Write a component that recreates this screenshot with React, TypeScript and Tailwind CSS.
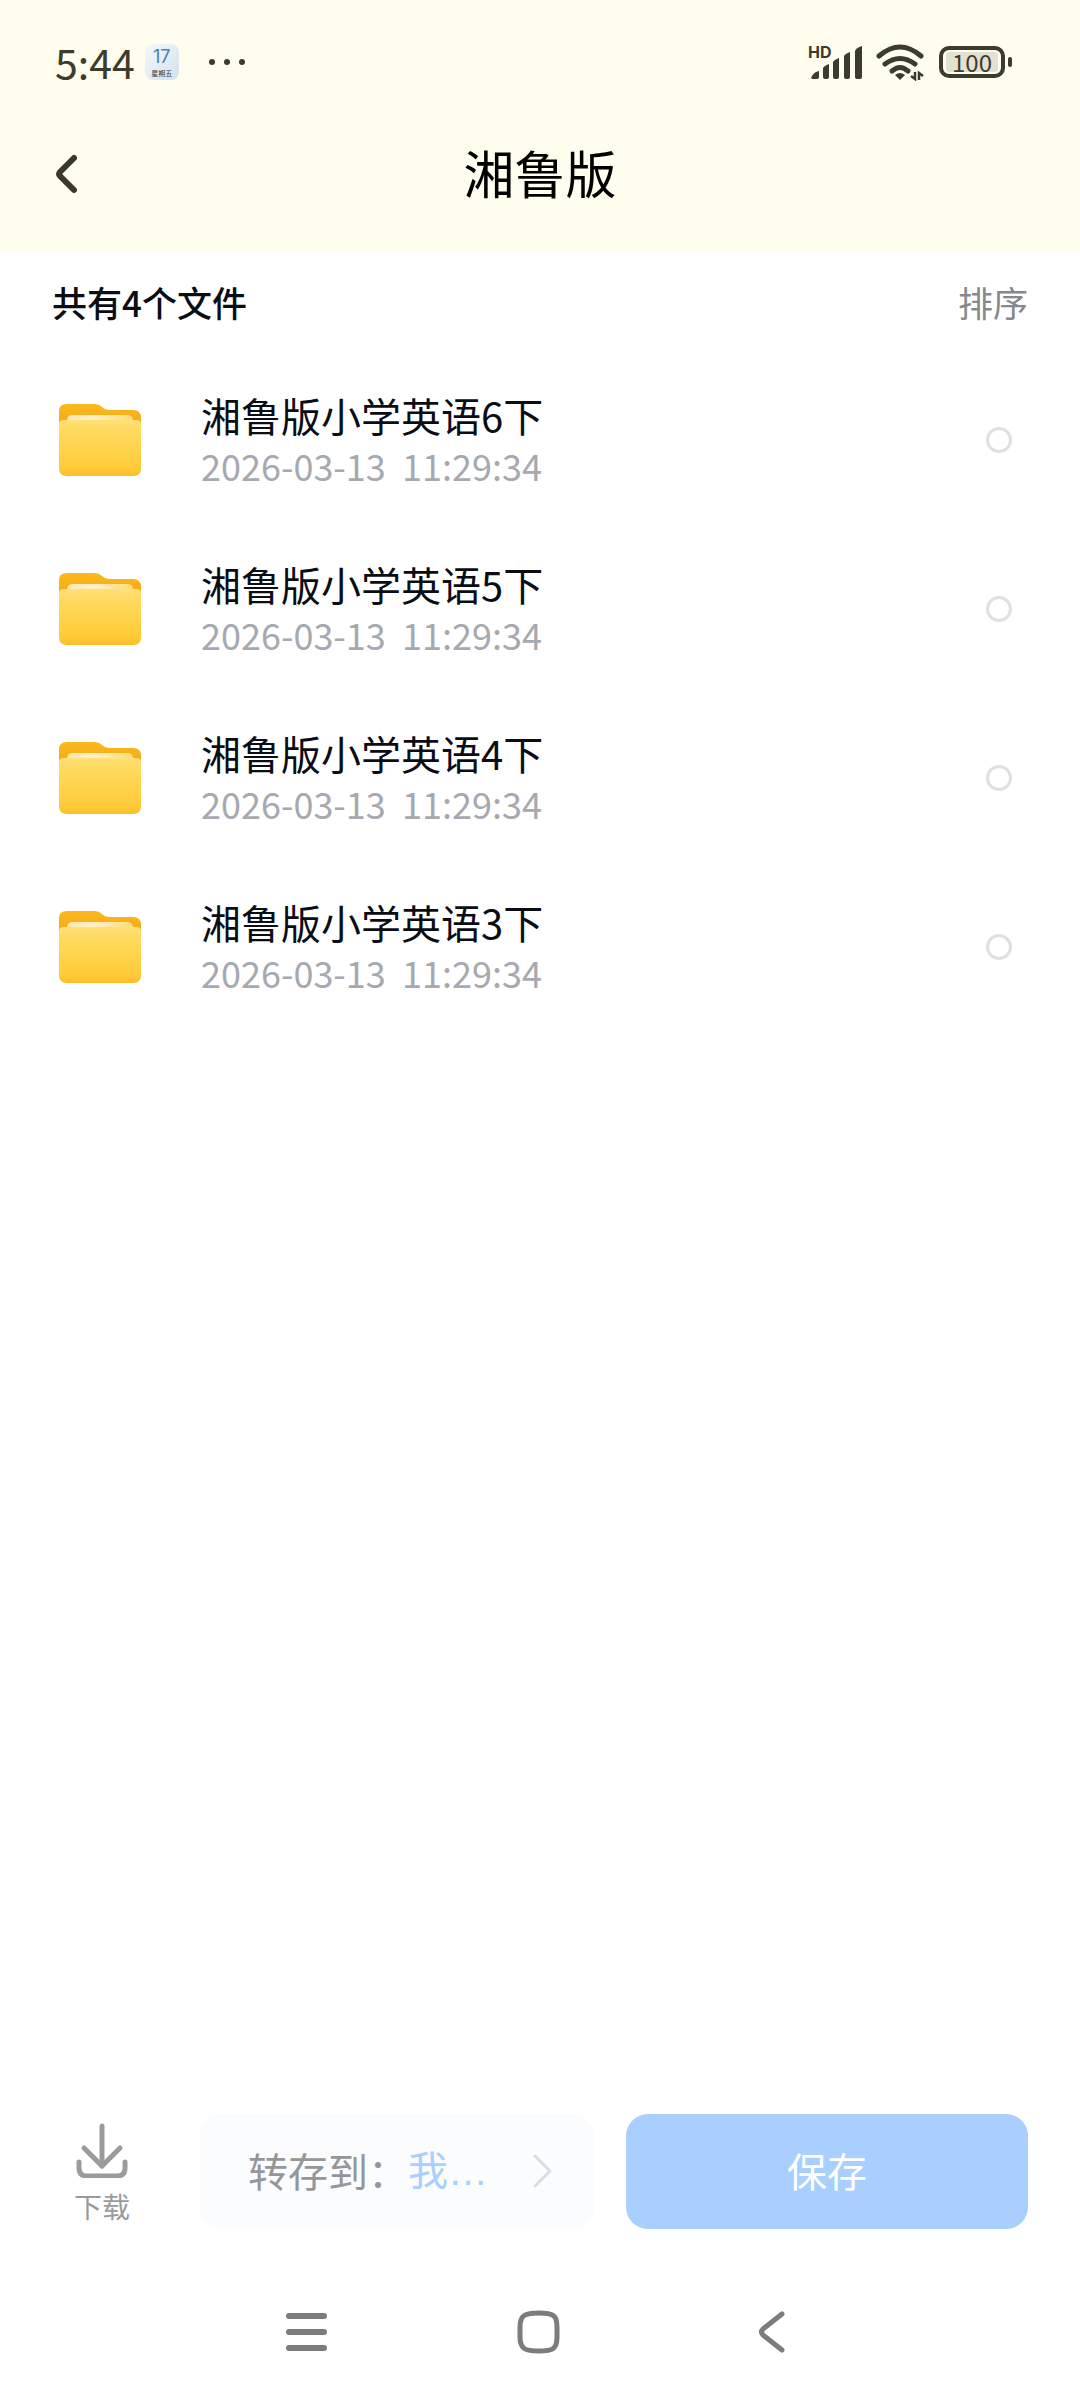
import { useState } from "react";

interface FileItem {
    id: number,
    name: string,
    date: string,
    time: string
}

const files: FileItem[] = [
    { id: 1, name: "湘鲁版小学英语6下", date: "2026-03-13", time: "11:29:34" },
    { id: 2, name: "湘鲁版小学英语5下", date: "2026-03-13", time: "11:29:34" },
    { id: 3, name: "湘鲁版小学英语4下", date: "2026-03-13", time: "11:29:34" },
    { id: 4, name: "湘鲁版小学英语3下", date: "2026-03-13", time: "11:29:34" },
];

function CalendarBadge() {
    return (
        <div className="ml-[10px] flex h-9 w-[34px] flex-col items-center justify-center rounded-lg bg-linear-to-br from-[#f4f9fb] to-[#d5e0ee]">
            <span className="font-[Inter,sans-serif] text-[18px] leading-[22px] text-[#4583b8]">17</span>
            <span className="text-[7px] leading-[11px] text-[#33373b]">星期五</span>
        </div>
    )
}

function StatusBar() {
    return (
        <div className="flex h-24 items-center pt-7 pr-[68px] pl-[55px] text-[#3d3b2c]">
            <span className="pb-0.5 text-[41px] leading-[40px]">5:44</span>
            <CalendarBadge />
            <svg className="ml-7" width="40" height="10" viewBox="0 0 40 10" fill="currentColor">
                <circle cx="5" cy="5" r="3" />
                <circle cx="20" cy="5" r="3" />
                <circle cx="35" cy="5" r="3" />
            </svg>
            <div className="ml-auto flex items-center">
                {/* signal */}
                <svg width="56" height="48" viewBox="0 -6 56 48" fill="currentColor">
                    <text x="1" y="14" fontSize="16" fontWeight="700" fontFamily="Inter, sans-serif">HD</text>
                    <path d="M6 35 Q3 35 5 32 Q7 28 12 27 V33 Q12 35 10 35 Z" />
                    <path d="M16 24 Q17 22 22 20 V33 Q22 35 20 35 H18 Q16 35 16 33 Z" />
                    <path d="M26 18 Q27 16 32 14 V33 Q32 35 30 35 H28 Q26 35 26 33 Z" />
                    <path d="M37 12 Q38 10 43 8 V33 Q43 35 41 35 H39 Q37 35 37 33 Z" />
                    <path d="M48 7 Q49 4 55 2 V33 Q55 35 53 35 H50 Q48 35 48 33 Z" />
                </svg>
                {/* wifi */}
                <svg className="ml-3" width="52" height="38" viewBox="0 0 52 38" fill="none" stroke="currentColor" strokeWidth="5" strokeLinecap="round">
                    <path d="M4 13 Q25 -5 46 13" />
                    <path d="M10 21 Q25 10 40 21" />
                    <path d="M17 28 Q25 21 33 28" />
                    <path d="M20 32 Q25 28 30 32 L25 37 Z" fill="currentColor" stroke="none" />
                    <path d="M40 29 V36 L36 33 M44 37 V30 L48 33" strokeWidth="2.500" strokeLinecap="butt" />
                </svg>
                {/* battery */}
                <div className="ml-3 flex items-center gap-[3px]">
                    <div className="flex h-8 w-[66px] items-center justify-center rounded-[10px] border-4 border-[#3d3b2c]">
                        <span className="w-[52px] rounded-sm bg-[#e2e1d2] text-center text-[24px] leading-[20px]">100</span>
                    </div>
                    <span className="h-[10px] w-1 rounded-sm bg-[#3d3b2c]" />
                </div>
            </div>
        </div>
    )
}

function FolderIcon() {
    return (
        <svg className="shrink-0" width="82" height="74" viewBox="0 0 82 74">
            <defs>
                <linearGradient id="folderBack" x1="0" y1="0" x2="0" y2="1">
                    <stop offset="0" stopColor="#fcb81c" />
                    <stop offset="1" stopColor="#f2a516" />
                </linearGradient>
                <linearGradient id="folderFront" x1="0" y1="0" x2="0" y2="1">
                    <stop offset="0" stopColor="#ffe07a" />
                    <stop offset="0.15" stopColor="#ffdb62" />
                    <stop offset="0.85" stopColor="#ffcb38" />
                    <stop offset="1" stopColor="#fbbe2a" />
                </linearGradient>
                <linearGradient id="folderPaper" x1="0" y1="0" x2="1" y2="0">
                    <stop offset="0" stopColor="#ffe7ac" />
                    <stop offset="0.4" stopColor="#fff0c8" />
                    <stop offset="1" stopColor="#ffdc70" />
                </linearGradient>
            </defs>
            <path d="M0 8 Q0 1 8 1 H35 Q40 1 43 4 Q46 7 51 7 H74 Q82 7 82 15 V30 H0 Z" fill="url(#folderBack)" />
            <path d="M8 18 Q8 12 13 12 H69 Q74 12 74 18 V24 H8 Z" fill="url(#folderPaper)" />
            <path d="M0 21 Q0 17 5 17 H77 Q82 17 82 21 V65 Q82 73 74 73 H8 Q0 73 0 65 Z" fill="url(#folderFront)" />
        </svg>
    )
}

export default function App() {

    const [selected, setSelected] = useState<number[]>([]);

    const toggle = (id: number) => {
        setSelected((prev) => prev.includes(id) ? prev.filter((item) => item !== id) : [...prev, id]);
    }

    return (
        <div className="flex min-h-screen flex-col bg-white font-['Noto_Sans_CJK_SC',sans-serif]">
            <header className="bg-[#fffded]">
                <StatusBar />
                <div className="grid h-39 grid-cols-[1fr_auto_1fr] items-center px-[52px]">
                    <button type="button" aria-label="返回" className="justify-self-start">
                        <svg width="30" height="46" viewBox="0 0 30 46" fill="none" stroke="#3a3829" strokeWidth="6" strokeLinecap="round" strokeLinejoin="round">
                            <path d="M22 7 L8 21 Q6 23 8 25 L22 39" />
                        </svg>
                    </button>
                    <h1 className="pb-1 text-[51px] leading-[60px] text-black">湘鲁版</h1>
                </div>
            </header>

            <main className="flex-1">
                <div className="flex h-[103px] items-center justify-between px-[52px] pb-1 text-[35px] leading-[50px]">
                    <p className="font-medium text-[#0b0d14]">共有4个文件</p>
                    <button type="button" className="text-[#85888d]">排序</button>
                </div>

                <ul>
                    {files.map((file) => (
                        <li key={file.id}>
                            <label htmlFor={`file-${file.id}`} className="flex h-[169px] items-center pr-[68px] pl-[59px]">
                                <FolderIcon />
                                <div className="ml-15 flex-1">
                                    <p className="text-[40px] leading-[50px] text-[#0b0d14]">{file.name}</p>
                                    <p className="text-[36px] leading-[50px] whitespace-pre text-[#a6a9af]">{file.date}{"  "}{file.time}</p>
                                </div>
                                <input
                                    type="checkbox"
                                    id={`file-${file.id}`}
                                    checked={selected.includes(file.id)}
                                    onChange={() => toggle(file.id)}
                                    className="h-[26px] w-[26px] appearance-none rounded-full border-3 border-[#e0e0e0] checked:border-[#a8cfff] checked:bg-[#a8cfff]"
                                />
                            </label>
                        </li>
                    ))}
                </ul>
            </main>

            {/* bottom actions */}
            <div className="flex h-[115px] items-stretch px-[52px]">
                <button type="button" className="flex w-25 flex-col items-center pt-1 text-[#9b9b9b]">
                    <svg width="56" height="60" viewBox="0 0 56 60" fill="none" stroke="currentColor" strokeWidth="5" strokeLinecap="round" strokeLinejoin="round">
                        <path d="M28 8 V48" />
                        <path d="M10 30 L28 48 L46 30" />
                        <path d="M5 44 V50 Q5 58 13 58 H43 Q51 58 51 50 V44" />
                    </svg>
                    <span className="mt-2 text-[28px] leading-[40px]">下载</span>
                </button>
                <button type="button" className="ml-12 flex flex-1 items-center rounded-[22px] bg-[#fafcfe] pr-10 pb-1 pl-12 text-[40px] leading-[50px]">
                    <span className="text-[#959698]">转存到：</span>
                    <span className="text-[#a8cfff]">我<span className="font-['Liberation_Sans',sans-serif]">…</span></span>
                    <svg className="ml-auto" width="24" height="40" viewBox="0 0 24 40" fill="none" stroke="#dcdddf" strokeWidth="3" strokeLinecap="round" strokeLinejoin="round">
                        <path d="M5 6 L20 21 L5 36" />
                    </svg>
                </button>
                <button type="button" className="ml-8 w-[402px] shrink-0 rounded-[22px] bg-[#a8cfff] pb-1 text-[40px] leading-[50px] text-white">
                    保存
                </button>
            </div>

            {/* system navigation */}
            <nav className="mt-[35px] flex h-34 items-center justify-center gap-[173px] text-[#7c7c7c]">
                <button type="button" aria-label="菜单">
                    <svg width="60" height="60" viewBox="0 0 60 60" fill="none" stroke="currentColor" strokeWidth="6" strokeLinecap="round">
                        <path d="M12 14 H47 M12 30 H47 M12 46 H47" />
                    </svg>
                </button>
                <button type="button" aria-label="主页">
                    <svg width="60" height="60" viewBox="0 0 60 60" fill="none" stroke="currentColor" strokeWidth="5">
                        <path d="M29 11 C43 11 47 13 47 25 V35 C47 47 43 49 29 49 C15 49 10 47 10 35 V25 C10 13 15 11 29 11 Z" />
                    </svg>
                </button>
                <button type="button" aria-label="后退">
                    <svg width="60" height="60" viewBox="0 0 60 60" fill="none" stroke="currentColor" strokeWidth="5" strokeLinecap="round" strokeLinejoin="round">
                        <path d="M39 12 L20 27 Q17 30 20 33 L39 48" />
                    </svg>
                </button>
            </nav>
        </div>
    )
}
